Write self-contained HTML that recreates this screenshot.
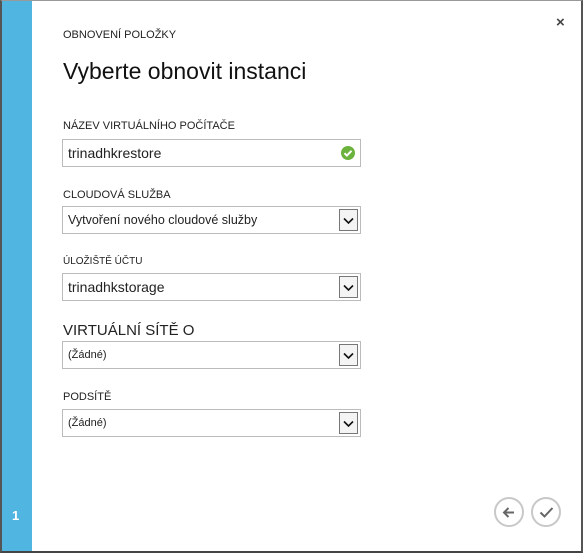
<!DOCTYPE html><html><head><meta charset="utf-8"><style>
body{margin:0;width:583px;height:553px;overflow:hidden;background:#fff;font-family:"Liberation Sans",sans-serif;}
.frame{position:absolute;left:0;top:0;border-left:2px solid #555;border-right:2px solid #555;border-bottom:2px solid #444;border-top:1px solid #999;box-sizing:border-box;width:583px;height:553px}
.bar{position:absolute;left:2px;top:1px;width:30px;height:550px;background:#50b5e0}
.num{position:absolute;left:12px;top:508px;color:#fff;font-weight:bold;font-size:13px}
.t{position:absolute;left:63px;color:#222;font-size:11px}
.box{position:absolute;left:62px;width:299px;height:28px;border:1px solid #bbb;box-sizing:border-box;font-size:14px;line-height:27px;padding-left:5px;color:#222}
.dd{position:absolute;right:2px;top:2px;width:19px;height:22px;border:1px solid #777;box-sizing:border-box;background:#f4f4f4}
.dd svg{position:absolute;left:3px;top:7px}
.circ{position:absolute;top:497px;width:30px;height:30px;border:2px solid #c8c8c8;border-radius:50%;box-sizing:border-box}
</style></head><body>
<div class="frame"></div>
<div class="bar"></div><div class="num">1</div>
<div style="position:absolute;left:556px;top:14px;font-size:15px;font-weight:bold;color:#444">×</div>
<div class="t" style="top:29px">OBNOVENÍ POLOŽKY</div>
<div class="t" style="top:58px;font-size:23px;color:#111">Vyberte obnovit instanci</div>
<div class="t" style="top:120px">NÁZEV VIRTUÁLNÍHO POČÍTAČE</div>
<div class="box" style="top:139px">trinadhkrestore<svg style="position:absolute;right:5px;top:6px" width="14" height="14"><circle cx="7" cy="7" r="7" fill="#6cb33e"/><path d="M3.5 7.2l2.4 2.4 4.6-4.8" stroke="#fff" stroke-width="2" fill="none"/></svg></div>
<div class="t" style="top:189px">CLOUDOVÁ SLUŽBA</div>
<div class="box" style="top:206px;font-size:12.5px">Vytvoření nového cloudové služby<div class="dd"><svg width="11" height="8"><path d="M1 1.5l4.5 4.5 4.5-4.5" stroke="#111" stroke-width="1.6" fill="none"/></svg></div></div>
<div class="t" style="top:256px;font-size:10px">ÚLOŽIŠTĚ ÚČTU</div>
<div class="box" style="top:273px">trinadhkstorage<div class="dd"><svg width="11" height="8"><path d="M1 1.5l4.5 4.5 4.5-4.5" stroke="#111" stroke-width="1.6" fill="none"/></svg></div></div>
<div class="t" style="top:322px;font-size:15px">VIRTUÁLNÍ SÍTĚ O</div>
<div class="box" style="top:341px;font-size:11px">(Žádné)<div class="dd"><svg width="11" height="8"><path d="M1 1.5l4.5 4.5 4.5-4.5" stroke="#111" stroke-width="1.6" fill="none"/></svg></div></div>
<div class="t" style="top:391px">PODSÍTĚ</div>
<div class="box" style="top:409px;font-size:11px">(Žádné)<div class="dd"><svg width="11" height="8"><path d="M1 1.5l4.5 4.5 4.5-4.5" stroke="#111" stroke-width="1.6" fill="none"/></svg></div></div>
<div class="circ" style="left:494px"><svg style="position:absolute;left:6px;top:7px" width="14" height="13"><path d="M12 6.5H2M6.5 2L2 6.5 6.5 11" stroke="#666" stroke-width="2" fill="none"/></svg></div>
<div class="circ" style="left:531px"><svg style="position:absolute;left:6px;top:7px" width="15" height="13"><path d="M1.5 6.5l4 4 8-8.5" stroke="#666" stroke-width="2" fill="none"/></svg></div>
</body></html>
